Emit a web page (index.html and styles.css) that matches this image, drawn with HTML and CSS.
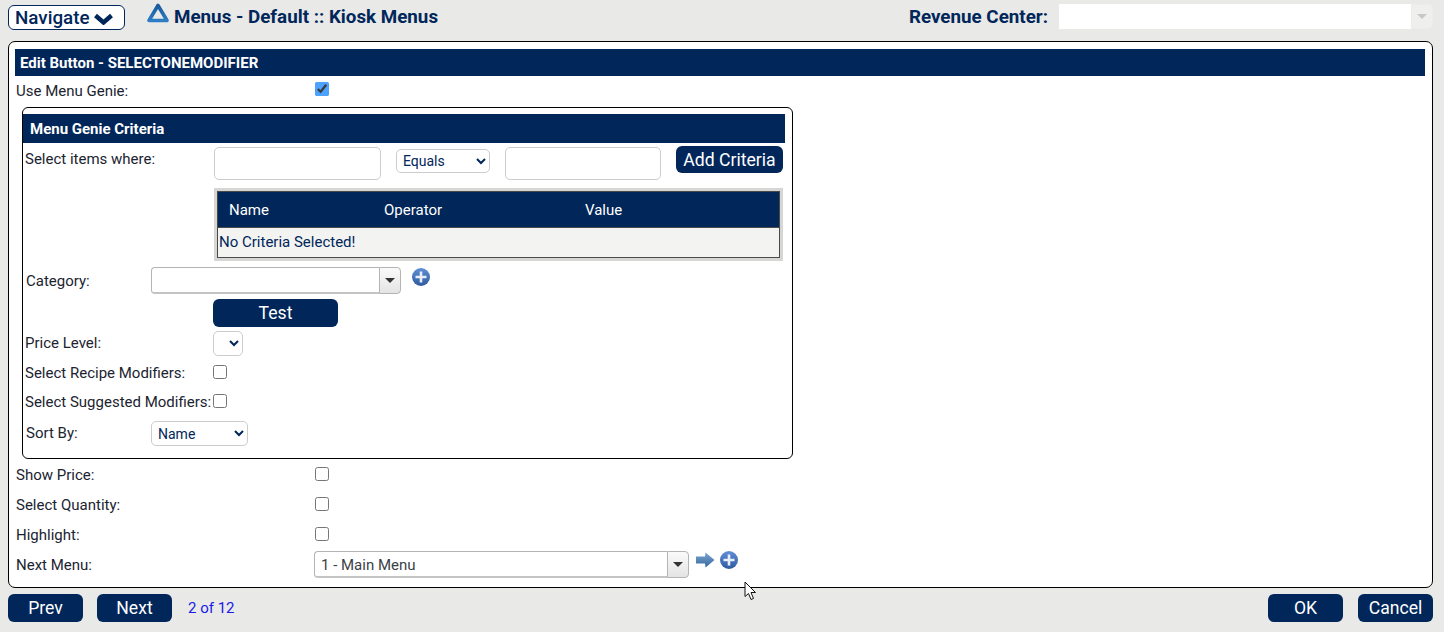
FILE: index.html
```html
<!DOCTYPE html>
<html lang="en">
<head>
    <meta charset="UTF-8">
    <meta name="viewport" content="width=device-width, initial-scale=1.0">
    <title>Kiosk Menus</title>
    <link rel="stylesheet" href="styles.css">
</head>
<body>
    <!-- Shared gradients for the icons -->
    <svg class="defs" width="0" height="0">
        <defs>
            <linearGradient id="plus-fill" x1="0" y1="0" x2="0" y2="1"><stop offset="0" stop-color="#5f8fd6"/><stop offset="1" stop-color="#2f5a9e"/></linearGradient>
            <linearGradient id="arrow-fill" x1="0" y1="0" x2="0" y2="1"><stop offset="0" stop-color="#7ba6d2"/><stop offset="1" stop-color="#36679c"/></linearGradient>
            <linearGradient id="logo-fill" x1="0" y1="0" x2="0" y2="1"><stop offset="0" stop-color="#1a5a9c"/><stop offset="1" stop-color="#2d7cc4"/></linearGradient>
        </defs>
    </svg>

    <!-- Top bar -->
    <div class="topbar">
        <button class="navigate">Navigate
            <svg width="19" height="12" viewBox="0 0 19 12"><path d="M1.5 2.5 L9.5 9.5 L17.5 2.5" fill="none" stroke="#00265a" stroke-width="4.4"/></svg>
        </button>
        <svg class="logo" width="24" height="22" viewBox="0 0 24 22"><path d="M12 3.5 L21 18.5 H3 Z" fill="none" stroke="url(#logo-fill)" stroke-width="3.6" stroke-linejoin="round"/></svg>
        <span class="page-title">Menus - Default :: Kiosk Menus</span>
        <label class="revenue-label">Revenue Center:</label>
        <div class="combo combo-disabled">
            <span class="combo-text"></span>
            <span class="combo-arrow"></span>
        </div>
    </div>

    <div class="panel">
        <div class="title-bar">Edit Button - SELECTONEMODIFIER</div>

        <div class="row row-genie">
            <label class="row-label">Use Menu Genie:</label>
            <input type="checkbox" checked>
        </div>

        <div class="genie-box">
            <div class="title-bar genie-title">Menu Genie Criteria</div>

            <div class="criteria-row">
                <label class="criteria-label">Select items where:</label>
                <input type="text" class="text-input">
                <select class="select-equals"><option>Equals</option></select>
                <input type="text" class="text-input">
                <button class="btn btn-add">Add Criteria</button>
            </div>

            <div class="criteria-table">
                <div class="criteria-head">
                    <span class="col-name">Name</span>
                    <span class="col-operator">Operator</span>
                    <span>Value</span>
                </div>
                <div class="criteria-empty">No Criteria Selected!</div>
            </div>

            <div class="category-row">
                <label class="short-label">Category:</label>
                <div class="combo combo-category">
                    <span class="combo-text"></span>
                    <span class="combo-arrow"></span>
                </div>
                <svg class="plus plus-category" width="20" height="20" viewBox="0 0 20 20"><circle cx="10" cy="10" r="9" fill="url(#plus-fill)"/><path d="M10 4.5 V15.5 M4.5 10 H15.5" stroke="#e8eef8" stroke-width="2.6"/></svg>
            </div>

            <button class="btn btn-test">Test</button>

            <div class="genie-row price-row">
                <label class="genie-label">Price Level:</label>
                <select class="select-price"><option></option></select>
            </div>
            <div class="genie-row recipe-row">
                <label class="genie-label">Select Recipe Modifiers:</label>
                <input type="checkbox">
            </div>
            <div class="genie-row suggested-row">
                <label class="genie-label">Select Suggested Modifiers:</label>
                <input type="checkbox">
            </div>
            <div class="sort-row">
                <label class="short-label">Sort By:</label>
                <select class="select-sort"><option>Name</option></select>
            </div>
        </div>

        <div class="row row-first">
            <label class="row-label">Show Price:</label>
            <input type="checkbox">
        </div>
        <div class="row">
            <label class="row-label">Select Quantity:</label>
            <input type="checkbox">
        </div>
        <div class="row">
            <label class="row-label">Highlight:</label>
            <input type="checkbox">
        </div>
        <div class="row row-next">
            <label class="row-label">Next Menu:</label>
            <div class="combo combo-next">
                <span class="combo-text">1 - Main Menu</span>
                <span class="combo-arrow"></span>
            </div>
            <svg class="go-arrow" width="20" height="18" viewBox="0 0 20 18"><path d="M1 5.5 H10 L10.5 1.5 L19.5 9 L10.5 16.5 L10 12.5 H1 Z" fill="url(#arrow-fill)"/></svg>
            <svg class="plus" width="20" height="20" viewBox="0 0 20 20"><circle cx="10" cy="10" r="9" fill="url(#plus-fill)"/><path d="M10 4.5 V15.5 M4.5 10 H15.5" stroke="#e8eef8" stroke-width="2.6"/></svg>
        </div>
    </div>

    <!-- Footer buttons -->
    <div class="footer">
        <button class="btn btn-foot">Prev</button>
        <button class="btn btn-foot">Next</button>
        <span class="pager">2 of 12</span>
        <button class="btn btn-foot btn-ok">OK</button>
        <button class="btn btn-foot">Cancel</button>
    </div>

    <!-- Mouse pointer caught in the screenshot -->
    <svg class="cursor" width="13" height="20" viewBox="0 0 13 20"><path d="M1 1 V15.5 L4.5 12.5 L7 18.5 L9.5 17.5 L7 11.5 H11.5 Z" fill="#fff" stroke="#111" stroke-width="1"/></svg>
</body>
</html>
```

FILE: styles.css
```css
* {
    box-sizing: border-box;
}
body {
    font-family: Roboto, "Liberation Sans", sans-serif;
    font-size: 15px;
    background-color: #e9e9e8;
    color: #00265a;
    margin: 0;
    padding: 0 11px 0 8px;
    height: 632px;
    overflow: hidden;
    position: relative;
}
label {
    color: #1b2430;
}
.defs {
    position: absolute;
}

/* Top bar */
.topbar {
    display: flex;
    align-items: flex-start;
    height: 41px;
}
.navigate {
    display: flex;
    align-items: center;
    gap: 4px;
    width: 117px;
    height: 25px;
    margin-top: 5px;
    padding: 0 0 0 6px;
    background: #fff;
    border: 1px solid #00265a;
    border-radius: 6px;
    color: #00265a;
    font-family: inherit;
    font-size: 18.8px;
    font-weight: 500;
}
.navigate svg {
    margin-top: 3px;
}
.logo {
    margin: 2px 0 0 21px;
}
.page-title {
    margin: 6px 0 0 4px;
    font-size: 18.8px;
    font-weight: 700;
    line-height: 22px;
}
.revenue-label {
    margin: 6px 0 0 auto;
    color: #00265a;
    font-size: 18.8px;
    font-weight: 700;
    line-height: 22px;
}

/* Combo box (text part and drop button) */
.combo {
    display: flex;
    height: 27px;
}
.combo-text {
    flex: 1;
    padding: 1px 6px 0;
    background: #fff;
    border: 1px solid #b4b4b4;
    border-right: none;
    border-bottom: 2px solid #c4c4c4;
    border-radius: 4px 0 0 4px;
    color: #3a3f47;
    line-height: 24px;
}
.combo-arrow {
    display: flex;
    align-items: center;
    justify-content: center;
    width: 22px;
    background: linear-gradient(#fafafa, #e4e4e4);
    border: 1px solid #b4b4b4;
    border-radius: 0 4px 4px 0;
}
.combo-arrow::after {
    content: "";
    border-left: 5px solid transparent;
    border-right: 5px solid transparent;
    border-top: 5px solid #333;
}
.combo-disabled {
    width: 374px;
    height: 25px;
    margin: 4px 0 0 11px;
}
.combo-disabled .combo-text {
    border: none;
    border-radius: 0;
}
.combo-disabled .combo-arrow {
    background: #efefee;
    border: 1px solid #ececec;
}
.combo-disabled .combo-arrow::after {
    border-top-color: #c8c8c8;
}

/* Main panel */
.panel {
    height: 547px;
    padding: 7px 7px 0 6px;
    background: #fff;
    border: 1px solid #000;
    border-radius: 7px;
}
.title-bar {
    height: 27px;
    padding: 1px 0 0 5px;
    background: #00265a;
    color: #fff;
    font-weight: 700;
    line-height: 26px;
}
.row {
    display: flex;
    align-items: center;
    height: 30px;
    padding-left: 1px;
}
.row-label {
    width: 299px;
}
.row-genie {
    height: 29px;
    margin-bottom: 2px;
}
.row-first {
    margin-top: 1px;
}
input[type="checkbox"] {
    width: 14px;
    height: 14px;
    margin: 0 0 2px;
    accent-color: #4ba3ff;
}
.row-genie input {
    margin-bottom: 3px;
}

/* Menu Genie box */
.genie-box {
    width: 771px;
    height: 352px;
    margin-left: 7px;
    padding: 6px 0 0 0;
    background: #fff;
    border: 1px solid #000;
    border-radius: 6px;
}
.genie-title {
    width: 762px;
    height: 29px;
    padding-left: 7px;
    line-height: 28px;
}
.criteria-row {
    display: flex;
    align-items: flex-start;
    height: 45px;
    padding: 3px 0 0 1px;
}
.criteria-label {
    width: 190px;
    margin-top: 4px;
    padding-left: 1px;
}
.text-input {
    width: 167px;
    height: 33px;
    margin-top: 1px;
    background: #fff;
    border: 1px solid #ccc;
    border-radius: 5px;
}
.text-input + select {
    margin: 3px 15px 0;
}
select + .text-input {
    width: 156px;
}
select {
    height: 24px;
    padding: 0 0 0 2px;
    background-color: #fff;
    border: 1px solid #ccc;
    border-radius: 5px;
    color: #00265a;
    font-family: inherit;
    font-size: 14px;
}
.select-equals {
    width: 94px;
}
.btn {
    background: #00265a;
    border: none;
    border-radius: 6px;
    color: #fff;
    font-family: inherit;
    font-size: 17.6px;
    padding: 0;
}
.btn-add {
    width: 107px;
    height: 27px;
    margin-left: 15px;
}
.criteria-table {
    width: 569px;
    height: 73px;
    margin-left: 191px;
    background: #f3f3f2;
    border: 3px solid #d6d6d5;
    outline: 1px solid #4a4a4a;
    outline-offset: -4px;
}
.criteria-head {
    display: flex;
    align-items: center;
    height: 37px;
    padding: 2px 0 0 12px;
    background: #00265a;
    border-bottom: 1px solid #4a4a4a;
    color: #fff;
}
.col-name {
    width: 155px;
}
.col-operator {
    width: 201px;
}
.criteria-empty {
    height: 27px;
    padding: 1px 0 0 2px;
    line-height: 26px;
}
.category-row {
    display: flex;
    align-items: center;
    height: 27px;
    margin-top: 6px;
    padding-left: 3px;
}
.short-label {
    width: 125px;
}
.combo-category {
    width: 250px;
}
.plus {
    margin: 0 0 8px 5px;
}
.plus-category {
    margin-left: 10px;
}
.btn-test {
    display: block;
    width: 125px;
    height: 28px;
    margin: 5px 0 0 190px;
}
.genie-row {
    display: flex;
    align-items: center;
    padding-left: 2px;
}
.genie-label {
    width: 189px;
    white-space: nowrap;
}
.price-row {
    height: 25px;
    margin-top: 4px;
}
.price-row .genie-label {
    margin-bottom: 2px;
}
.select-price {
    width: 30px;
    height: 25px;
    margin-left: -1px;
}
.recipe-row {
    height: 15px;
    margin-top: 8px;
}
.suggested-row {
    height: 15px;
    margin-top: 14px;
}
.recipe-row label,
.suggested-row label {
    margin-top: 2px;
}
.recipe-row input,
.suggested-row input {
    margin: 0 0 0 -1px;
}
.sort-row {
    display: flex;
    align-items: center;
    height: 25px;
    margin-top: 13px;
    padding-left: 3px;
}
.sort-row .short-label {
    margin-bottom: 2px;
}
.select-sort {
    width: 97px;
    height: 25px;
}

/* Next Menu row */
.row-next {
    height: 27px;
    margin-top: 1px;
}
.combo-next {
    width: 375px;
    margin-left: -1px;
}
.go-arrow {
    margin: 0 0 9px 6px;
}
.row-next .plus {
    margin: 0 0 9px 4px;
}

/* Footer */
.footer {
    display: flex;
    align-items: center;
    gap: 14px;
    height: 28px;
    margin-top: 6px;
}
.btn-foot {
    width: 75px;
    height: 28px;
}
.pager {
    margin-left: 2px;
    color: #1a1ae6;
    font-size: 15px;
}
.btn-ok {
    margin: 0 1px 0 auto;
}
.cursor {
    position: absolute;
    left: 744px;
    top: 581px;
}
```
